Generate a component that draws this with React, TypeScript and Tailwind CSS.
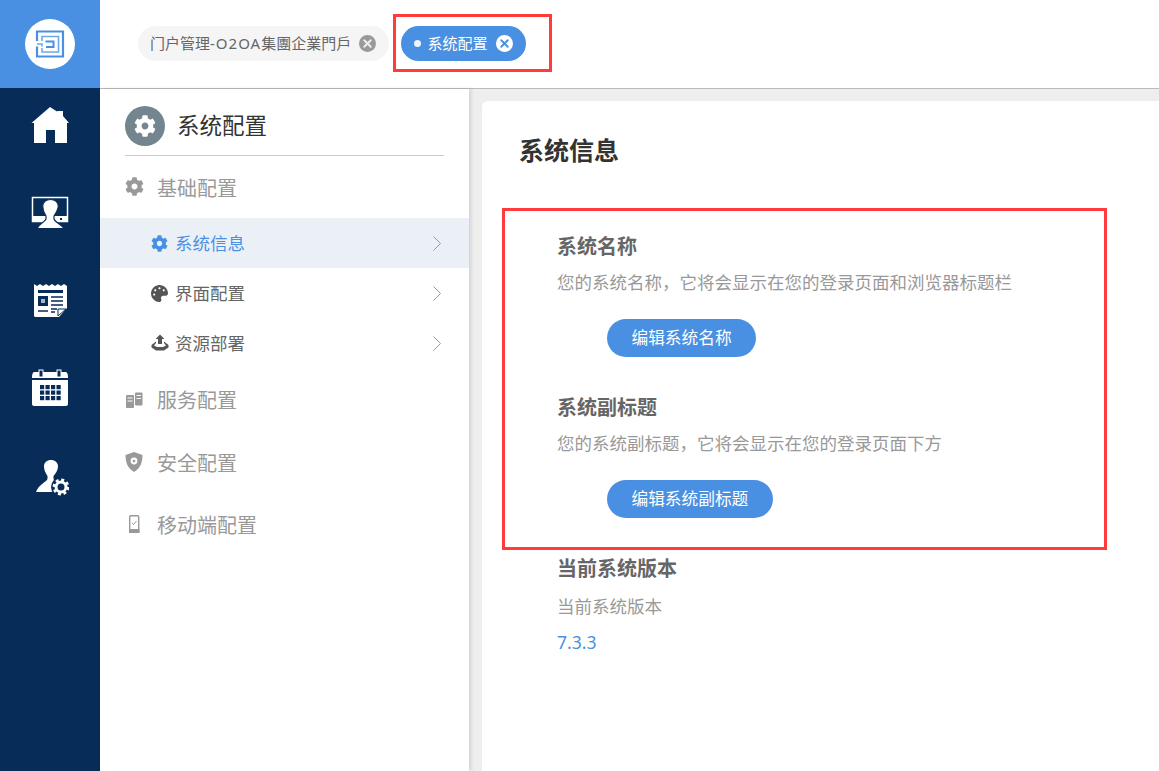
import { ReactNode } from "react"
import { FaCog, FaPalette } from "react-icons/fa"
import { X } from "lucide-react"

const cjk = { fontFamily: '"Noto Sans", "Noto Sans CJK SC", sans-serif' }

function Logo() {
  return (
    <svg width="50" height="50" viewBox="0 0 50 50" className="rounded-full bg-white">
      <path d="M12 22V12.500H38V37.500H12V27.500" fill="none" stroke="#4a90e2" strokeWidth="2.200" />
      <path d="M12 25H17V27.500M17 22V17.500H33.500V33H17V29" fill="none" stroke="#6fa8ea" strokeWidth="1.600" />
      <path d="M20.500 22.500H28.500V28H21" fill="none" stroke="#4a90e2" strokeWidth="2" />
    </svg>
  )
}

function HomeIcon() {
  return (
    <svg width="38" height="38" viewBox="0 0 38 38" fill="white">
      <path d="M19 0L26 4.500L26.500 4H32V9L38 16H36V36H24V23H15V36H3V16H0.500Z" />
    </svg>
  )
}

function PortalIcon() {
  return (
    <svg width="38" height="38" viewBox="0 0 38 38">
      <rect x="1.500" y="3.500" width="35" height="24" fill="none" stroke="white" strokeWidth="1.500" />
      <rect x="1" y="22" width="36" height="6" fill="white" />
      <path
        d="M15 22L15 25C14 28 8 30 6 34.500H33C30 30 24 28 23 25L23 22C25 19 27.300 15.500 27.300 12C27.300 8 24 5.500 19.500 5.500C15 5.500 11.700 8 11.700 12C11.700 15.500 13 19 15 22Z"
        fill="white"
        stroke="#072c57"
        strokeWidth="1.200"
      />
      <rect x="29" y="24" width="2" height="2" fill="#072c57" />
    </svg>
  )
}

function NewsIcon() {
  return (
    <svg width="38" height="38" viewBox="0 0 38 38">
      <path
        d="M3 3L6 5L9 3L12 5L15 3L18 5L21 3L24 5L27 3L30 5L33 3L36 5V27L28 36H4L3 35Z"
        fill="white"
      />
      <rect x="7" y="9" width="25" height="3" fill="#072c57" />
      <rect x="7" y="15" width="10" height="10" fill="#072c57" />
      <rect x="10" y="18" width="4" height="4" fill="#a9b8c9" />
      <path d="M20 16H32M20 20H32M20 24H32M7 30H17M20 28H26M20 31H24" stroke="#072c57" strokeWidth="1.500" />
      <path d="M27 35V28H35Z" fill="white" stroke="#072c57" strokeWidth="1" />
    </svg>
  )
}

function CalendarIcon() {
  const cells = []
  for (let r = 0; r < 3; r++) {
    for (let c = 0; c < 4; c++) {
      cells.push(<rect key={`${r}-${c}`} x={9 + c * 5.500} y={17 + r * 5.500} width="4.200" height="4.200" fill="#072c57" />)
    }
  }
  return (
    <svg width="38" height="38" viewBox="0 0 38 38">
      <path d="M1 10C1 5 2 4 4 4H34C36 4 37 5 37 10Z" fill="white" />
      <path d="M1 12H37V36C37 37 36 38 35 38H3C2 38 1 37 1 36Z" fill="white" />
      <rect x="8" y="2" width="4" height="7" fill="#072c57" stroke="white" strokeWidth="1" />
      <rect x="26" y="2" width="4" height="7" fill="#072c57" stroke="white" strokeWidth="1" />
      {cells}
    </svg>
  )
}

function AdminIcon() {
  return (
    <svg width="38" height="42" viewBox="0 0 38 42">
      <path
        d="M16.500 21L16.500 24C15.500 27 8 29 5 37H28V28C25 27 23 25.500 22.500 24L22.500 21C25 18 27 15 27 11.500C27 7.500 24 5 20 5C16 5 13 7.500 13 11.500C13 15 14.500 18 16.500 21Z"
        fill="white"
      />
      <circle cx="30" cy="32" r="10" fill="#072c57" />
      <circle cx="30" cy="32" r="5" fill="none" stroke="white" strokeWidth="3" />
      <circle cx="30" cy="32" r="7.200" fill="none" stroke="white" strokeWidth="2.500" strokeDasharray="3 2.650" />
    </svg>
  )
}

function ServerIcon() {
  return (
    <svg width="18" height="18" viewBox="0 0 18 18" fill="#999" className="translate-y-[-1px]">
      <rect x="1" y="4" width="8" height="13" rx="1" />
      <rect x="10" y="1.500" width="7.500" height="13" rx="1" />
      <path d="M2.500 7H7.500M2.500 10H7.500M11.500 4.500H16M11.500 7.500H16" stroke="white" strokeWidth="1" />
    </svg>
  )
}

function ShieldIcon() {
  return (
    <svg width="18" height="20" viewBox="0 0 18 20" className="translate-y-[-2px]">
      <path d="M9 0L17.500 3C17.500 11 15 16.500 9 20C3 16.500 0.500 11 0.500 3Z" fill="#999" />
      <circle cx="9" cy="9" r="3.400" fill="white" />
      <circle cx="9" cy="9" r="1.300" fill="#999" />
    </svg>
  )
}

function MobileIcon() {
  return (
    <svg width="18" height="18" viewBox="0 0 18 18" className="translate-y-[-2px]">
      <rect x="4.700" y="0.700" width="9" height="16.600" rx="1" fill="none" stroke="#999" strokeWidth="1.400" />
      <rect x="4" y="14" width="10.500" height="4" fill="#999" />
      <path d="M7 8L8.500 9.500L11.500 6" fill="none" stroke="#999" strokeWidth="1" />
    </svg>
  )
}

function UploadIcon() {
  return (
    <svg width="18" height="18" viewBox="0 0 18 18" fill="#555">
      <path d="M9 0.500L13.500 5H11V10H7V5H4.500Z" />
      <path d="M5 7.500L0.500 11V13.500L5 16.500H13L17.500 13.500V11L13 7.500V9L15 11.500L12 13H6L3 11.500L5 9Z" />
    </svg>
  )
}

function Chevron() {
  return (
    <svg width="8" height="15" viewBox="0 0 8 15" fill="none" stroke="#999" strokeWidth="1">
      <path d="M0.500 0.500L7.500 7.500L0.500 14.500" />
    </svg>
  )
}

function Group({ icon, label, first }: { icon: ReactNode; label: string; first?: boolean }) {
  return (
    <div
      className={`flex items-center pl-[25px] text-[20px] text-[#999] ${first ? "h-[62px] pt-[4px]" : "h-[62.500px]"}`}
    >
      <span className="flex w-[32px] items-center">{icon}</span>
      {label}
    </div>
  )
}

function SubItem({ icon, label, active }: { icon: ReactNode; label: string; active?: boolean }) {
  return (
    <div
      className={`flex h-[50px] items-center pl-[51px] pr-[28px] text-[17.500px] ${active ? "bg-[#ebf0f7] text-[#4a90e2]" : "text-[#666]"}`}
    >
      <span className="flex w-[24px] items-center">{icon}</span>
      <span className="flex-1">{label}</span>
      <Chevron />
    </div>
  )
}

function Field({ title, desc, children }: { title: string; desc: string; children: ReactNode }) {
  return (
    <div className="mb-[31px]">
      <div className="flex h-[39px] items-center text-[20px] font-bold text-[#666]">{title}</div>
      <div className="flex h-[33px] items-center text-[17.500px] text-[#999]">{desc}</div>
      {children}
    </div>
  )
}

function EditButton({ label }: { label: string }) {
  return (
    <button className="ml-[50px] mt-[20px] block h-[38px] rounded-full bg-[#4a90e2] px-[24.500px] text-[16.700px] text-white">
      {label}
    </button>
  )
}

export default function App() {
  return (
    <div className="relative flex h-[771px] w-[1159px] overflow-hidden bg-white" style={cjk}>
      <aside className="flex w-[100px] shrink-0 flex-col bg-[#072c57]">
        <div className="flex h-[88px] items-center justify-center bg-[#4a90e2]">
          <Logo />
        </div>
        <nav className="flex flex-col items-center gap-[49px] pt-[19px]">
          <HomeIcon />
          <PortalIcon />
          <NewsIcon />
          <CalendarIcon />
          <AdminIcon />
        </nav>
      </aside>

      <div className="flex min-w-0 flex-1 flex-col">
        <header className="flex h-[89px] shrink-0 items-start gap-[12px] border-b border-[#bbb] pl-[38px] pt-[26px]">
          <div className="flex h-[35px] w-[251px] items-center rounded-full bg-[#f5f5f5] pl-[12px] text-[15px] text-[#666]">
            <span className="whitespace-nowrap">
              门户管理<span className="tracking-[1px]">-O2OA</span>集團企業門戶
            </span>
            <span className="ml-[8px] flex h-[17px] w-[17px] items-center justify-center rounded-full bg-[#999]">
              <X size={13} strokeWidth={3.500} className="text-[#eee]" />
            </span>
          </div>
          <div className="flex h-[35px] w-[125px] items-center rounded-full bg-[#4a90e2] pl-[13px] text-[15px] text-white">
            <span className="mr-[7px] h-[6.500px] w-[6.500px] rounded-full bg-[#eef5fd]" />
            <span className="whitespace-nowrap">系统配置</span>
            <span className="ml-[8px] flex h-[17px] w-[17px] items-center justify-center rounded-full bg-white">
              <X size={13} strokeWidth={3.500} className="text-[#4a90e2]" />
            </span>
          </div>
        </header>

        <div className="flex min-h-0 flex-1 bg-[#eeeeee]">
          <div className="h-full w-[369px] shrink-0 bg-white shadow-[2px_0_4px_rgba(0,0,0,0.12)]">
            <div className="ml-[25px] mr-[25px] flex h-[67px] items-center gap-[12px] border-b border-[#ccc] pt-[8px] text-[22.500px] text-[#333]">
              <span className="flex h-[40px] w-[40px] items-center justify-center rounded-full bg-[#738690]">
                <FaCog size={22} className="text-white" />
              </span>
              系统配置
            </div>
            <Group first icon={<FaCog size={19} className="translate-y-[-3px]" />} label="基础配置" />
            <SubItem icon={<FaCog size={17} className="text-[#4a90e2]" />} label="系统信息" active />
            <SubItem icon={<FaPalette size={17} className="text-[#555]" />} label="界面配置" />
            <SubItem icon={<UploadIcon />} label="资源部署" />
            <div className="pt-[2px]">
              <Group icon={<ServerIcon />} label="服务配置" />
              <Group icon={<ShieldIcon />} label="安全配置" />
              <Group icon={<MobileIcon />} label="移动端配置" />
            </div>
          </div>

          <main className="ml-[13px] mt-[12px] flex-1 rounded-tl-md bg-white pl-[37px]">
            <h1 className="flex h-[100px] items-center pb-[1px] text-[25px] font-bold text-[#333]">系统信息</h1>
            <div className="pl-[38px] pt-[26px]">
              <Field title="系统名称" desc="您的系统名称，它将会显示在您的登录页面和浏览器标题栏">
                <EditButton label="编辑系统名称" />
              </Field>
              <Field title="系统副标题" desc="您的系统副标题，它将会显示在您的登录页面下方">
                <EditButton label="编辑系统副标题" />
              </Field>
              <div className="flex h-[40px] items-center text-[20px] font-bold text-[#666]">当前系统版本</div>
              <div className="flex h-[34px] items-center text-[17.500px] text-[#999]">当前系统版本</div>
              <div className="flex h-[38px] items-center text-[17.500px] text-[#4a90e2]">7.3.3</div>
            </div>
          </main>
        </div>
      </div>

      {/* red annotation boxes sit on top of the page */}
      <div className="pointer-events-none absolute left-[393px] top-[14px] h-[58px] w-[159px] border-[3px] border-[#ff3b3b]" />
      <div className="pointer-events-none absolute left-[502px] top-[208px] h-[342px] w-[605px] border-[3px] border-[#ff3b3b]" />
    </div>
  )
}
